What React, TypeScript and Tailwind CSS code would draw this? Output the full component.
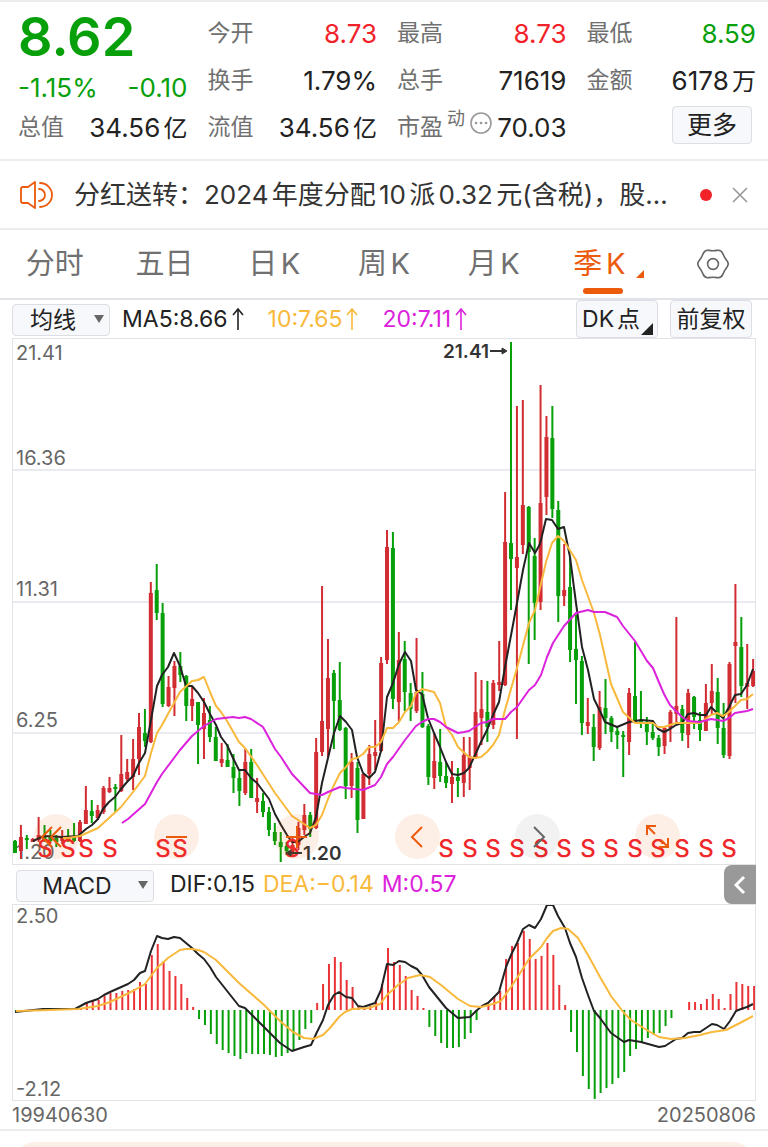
import React from 'react';

type Candle = [high: number, top: number, bottom: number, low: number, up: 0 | 1];

const START_X = 15;
const STEP = 5.905;

const RED = '#d22d32';
const GREEN = '#07a00a';

const candles: Candle[] = [
  [840, 841, 853, 853, 0], [825, 837, 851, 859, 1], [835, 838, 840, 849, 0], [838, 839, 842, 842, 1],
  [817, 835, 840, 842, 1], [825, 836, 840, 842, 0], [830, 837, 841, 843, 0], [835, 838, 842, 847, 0],
  [830, 837, 841, 844, 1], [829, 838, 841, 842, 0], [823, 836, 841, 842, 0], [820, 822, 841, 842, 1],
  [786, 810, 824, 824, 1], [800, 811, 816, 823, 0], [805, 810, 818, 820, 1], [786, 788, 812, 814, 1],
  [777, 788, 792, 793, 1], [784, 787, 789, 812, 0], [735, 774, 791, 792, 1], [759, 772, 779, 781, 1],
  [739, 759, 777, 790, 1], [713, 727, 759, 775, 1], [709, 733, 741, 747, 0], [582, 593, 742, 743, 1],
  [564, 590, 613, 620, 0], [603, 613, 704, 707, 0], [676, 687, 706, 707, 1], [661, 666, 688, 716, 1],
  [652, 666, 675, 682, 0], [675, 676, 706, 721, 0], [687, 699, 706, 721, 1], [702, 702, 725, 764, 0],
  [698, 713, 729, 759, 1], [706, 720, 737, 742, 0], [727, 737, 761, 761, 0], [743, 759, 763, 767, 1],
  [744, 760, 767, 767, 0], [754, 767, 778, 793, 0], [770, 778, 791, 806, 0], [749, 762, 793, 795, 1],
  [749, 762, 798, 798, 0], [778, 798, 802, 813, 1], [793, 801, 812, 817, 0], [807, 812, 830, 836, 0],
  [823, 832, 841, 845, 0], [832, 842, 847, 862, 0], [842, 846, 851, 855, 0], [838, 845, 853, 855, 1],
  [822, 828, 845, 850, 1], [804, 815, 830, 835, 1], [812, 815, 829, 837, 0], [738, 752, 828, 829, 1],
  [586, 721, 752, 756, 1], [639, 678, 729, 757, 1], [670, 673, 701, 749, 0], [662, 700, 730, 731, 0],
  [727, 728, 786, 799, 0], [753, 762, 786, 798, 1], [762, 768, 820, 833, 0], [774, 774, 819, 819, 1],
  [745, 754, 774, 785, 1], [720, 752, 756, 770, 1], [657, 663, 751, 752, 1], [530, 547, 660, 664, 1],
  [532, 548, 699, 709, 0], [632, 660, 702, 721, 1], [641, 659, 692, 711, 0], [683, 693, 709, 721, 0],
  [638, 692, 711, 713, 1], [672, 694, 727, 728, 0], [724, 726, 777, 785, 0], [733, 761, 778, 789, 1],
  [729, 762, 776, 782, 0], [763, 776, 783, 788, 0], [761, 777, 784, 803, 1], [768, 777, 781, 797, 0],
  [737, 755, 783, 797, 1], [737, 756, 768, 790, 1], [672, 712, 758, 759, 1], [680, 709, 718, 745, 1],
  [681, 712, 727, 742, 0], [680, 683, 725, 729, 1], [641, 682, 685, 691, 1], [492, 542, 685, 686, 1],
  [342, 543, 559, 610, 0], [406, 557, 568, 739, 1], [400, 505, 545, 554, 1], [506, 507, 552, 664, 0],
  [538, 556, 603, 640, 0], [385, 503, 602, 610, 1], [416, 437, 497, 515, 1], [406, 438, 509, 518, 0],
  [501, 510, 596, 622, 0], [544, 590, 596, 606, 1], [557, 587, 650, 662, 0], [615, 649, 660, 704, 0],
  [656, 661, 723, 735, 0], [698, 722, 726, 734, 1], [714, 727, 747, 761, 0], [691, 707, 748, 750, 1],
  [679, 708, 718, 734, 0], [716, 718, 732, 742, 0], [727, 731, 735, 749, 0], [731, 735, 737, 777, 0],
  [688, 693, 742, 755, 1], [642, 696, 722, 723, 0], [691, 720, 723, 728, 0], [717, 722, 732, 745, 0],
  [723, 732, 738, 740, 0], [735, 738, 747, 756, 0], [727, 728, 746, 754, 1], [710, 712, 728, 742, 1],
  [617, 706, 714, 723, 1], [705, 709, 733, 741, 0], [689, 693, 735, 748, 1], [696, 697, 717, 729, 0],
  [712, 720, 730, 741, 0], [684, 703, 731, 731, 1], [664, 691, 703, 715, 1], [678, 692, 728, 744, 0],
  [703, 728, 755, 758, 0], [662, 664, 756, 759, 1], [584, 642, 646, 703, 1], [617, 647, 686, 697, 0],
  [644, 683, 687, 709, 1], [659, 671, 686, 687, 1],
];

const ma5 =
  '33,841 44,836 62,837 78,836 86,829 92,825 98,819 103,809 109,802 115,797 121,789 127,782 133,776 139,763 145,753 151,720 157,686 162,675 168,667 174,653 180,666 186,686 192,686 198,693 204,702 210,714 216,725 221,737 227,745 233,758 239,770 245,770 251,778 257,783 269,799 275,814 281,825 287,835 292,842 298,842 304,837 310,833 316,817 322,783 328,758 334,733 340,716 346,722 352,730 357,757 363,773 369,778 375,772 381,751 387,697 393,683 399,664 405,652 411,661 416,690 422,694 428,718 434,733 440,747 446,762 452,774 458,775 464,773 469,768 475,755 481,742 487,730 493,715 499,702 505,667 512,630 517,603 523,570 529,543 535,553 540,544 546,519 552,520 558,529 564,527 570,557 576,603 582,647 588,670 594,699 600,711 605,722 617,727 629,722 641,720 653,721 658,729 664,732 670,729 676,725 682,723 688,714 694,713 700,715 706,715 711,707 717,713 723,718 729,707 735,695 741,694 747,685 753,669';
const ma10 =
  '63,838 68,838 80,836 98,828 109,818 121,807 133,792 145,776 151,753 157,733 162,725 174,703 180,692 192,681 198,680 204,677 210,692 216,706 221,712 227,721 239,742 245,748 257,765 275,793 292,816 304,824 310,828 316,825 322,815 328,799 334,785 340,773 346,767 352,759 357,758 363,754 369,747 375,747 381,742 387,728 393,728 399,722 405,712 411,706 416,693 422,689 434,692 440,703 446,727 452,735 458,747 469,757 475,758 481,757 487,752 493,745 499,735 505,710 517,668 529,623 535,610 540,588 546,562 552,543 558,536 564,541 576,560 582,580 594,613 600,635 611,684 623,712 635,723 653,723 658,727 664,727 676,723 700,723 711,715 717,713 723,716 729,712 741,700 747,699 753,694';
const ma20 =
  '122,823 128,819 145,804 157,782 162,774 180,750 192,736 204,726 216,719 233,717 239,718 245,717 251,719 263,727 275,749 281,757 292,774 310,793 322,795 328,792 340,787 346,788 363,790 375,785 381,777 387,764 393,757 405,740 416,726 422,722 428,719 434,719 440,722 446,727 458,733 464,732 469,731 475,727 481,723 487,722 493,719 505,719 511,712 517,707 529,690 535,685 541,675 547,657 553,643 564,626 576,613 588,610 594,612 605,612 617,617 623,626 635,641 647,661 653,668 658,680 664,694 670,705 676,711 682,717 688,721 700,722 711,719 723,721 729,718 735,713 741,712 747,711 753,709';

const histogram = [
  -2, 0, 0, 1, 1, 1, 1, 1, 1, 1, 1, 2, 7, 9, 10, 14, 17, 17, 19, 20, 21, 28, 26, 55, 66, 49, 39, 34, 26, 12, 3,
  -9, -15, -24, -34, -40, -43, -46, -49, -43, -44, -44, -44, -45, -47, -46, -43, -40, -30, -19, -13,
  7, 26, 46, 53, 48, 30, 23, 4, 2, 4, 8, 26, 62, 48, 45, 34, 20, 14, 2,
  -17, -26, -33, -38, -38, -37, -29, -23, -10, 0, 6, 14, 19, 51, 64, 67, 79, 71, 51, 54, 67, 55, 25, 5,
  -22, -42, -66, -79, -89, -83, -78, -74, -68, -62, -46, -39, -32, -28, -25, -23, -16, -8, 0, 0,
  8, 8, 6, 11, 16, 11, 2, 16, 28, 26, 24, 24,
];

const dif =
  '15,1012 43,1009 75,1009 86,1003 98,999 104,995 110,992 128,984 134,980 140,973 145,971 151,951 157,936 162,938 168,939 174,937 180,938 186,943 192,948 198,954 204,959 210,967 216,977 239,1006 245,1008 251,1014 263,1026 280,1043 292,1051 298,1049 304,1047 311,1045 317,1032 323,1020 328,1005 334,995 339,992 346,997 352,998 358,1006 363,1007 375,1003 381,990 387,964 393,965 399,961 405,962 411,966 417,969 422,975 429,987 446,1008 458,1018 470,1017 476,1011 482,1006 488,1003 494,997 499,992 506,967 511,955 517,943 523,929 529,925 535,928 541,919 547,905 553,905 558,916 565,928 570,943 576,957 582,978 588,995 594,1011 600,1018 611,1033 624,1042 629,1040 635,1041 641,1042 659,1047 665,1046 676,1039 682,1038 688,1033 694,1032 700,1032 706,1028 712,1024 717,1025 724,1029 730,1021 736,1011 741,1009 747,1007 753,1004';
const dea =
  '16,1011 50,1010 78,1009 98,1006 110,1002 133,991 145,984 157,968 168,958 180,950 186,949 192,949 198,950 204,952 216,960 227,971 239,983 263,1004 280,1021 293,1032 304,1038 313,1039 323,1035 330,1028 339,1017 345,1012 352,1009 369,1008 380,1004 387,995 398,985 408,978 420,975 430,977 441,985 458,999 470,1006 481,1007 493,1004 501,1001 511,987 517,978 529,959 541,947 547,938 553,931 561,928 568,929 578,938 588,955 600,977 611,996 624,1013 631,1020 645,1029 659,1037 671,1039 685,1038 700,1035 712,1032 726,1030 740,1023 753,1016';

const sellMarks = [45, 68, 86, 110, 163, 180, 292, 446, 470, 493, 517, 541, 564, 588, 611, 635, 658, 682, 706, 729];

const KLineChart = () => (
  <svg viewBox="12 338 744 527" className="block w-full" fontFamily="Inter, sans-serif">
    {[470, 602, 733].map((y) => (
      <line key={y} x1="12" x2="756" y1={y} y2={y} stroke="#e9ebf1" strokeWidth="2" />
    ))}
    <g fontSize="20" fill="#666">
      <text x="16" y="360">21.41</text>
      <text x="16" y="465">16.36</text>
      <text x="16" y="596">11.31</text>
      <text x="16" y="727">6.25</text>
      <text x="16" y="859">1.20</text>
    </g>
    {candles.map(([high, top, bottom, low, up], i) => {
      const x = START_X + i * STEP;
      const fill = up ? RED : GREEN;
      return (
        <g key={i} fill={fill}>
          <rect x={x - 1} y={high} width="2" height={low - high} />
          <rect x={x - 2} y={top} width="4" height={bottom - top} />
        </g>
      );
    })}
    <g fill="none" strokeWidth="2" strokeLinejoin="round">
      <polyline points={ma5} stroke="#222" />
      <polyline points={ma10} stroke="#f9b93c" />
      <polyline points={ma20} stroke="#dc22dc" />
    </g>
    <g fontSize="24" fontWeight="500" fill="#f0282c" textAnchor="middle">
      {sellMarks.map((x) => (
        <text key={x} x={x} y="857">S</text>
      ))}
    </g>
    <g fontSize="19" fontWeight="600" fill="#333">
      <text x="443" y="358">21.41</text>
      <text x="303" y="860">1.20</text>
    </g>
    <g stroke="#333" strokeWidth="2" fill="#333">
      <path d="M490 351H504" />
      <path d="M502 348L507 351L502 354Z" strokeWidth="1" />
      <path d="M288 853H302" />
      <path d="M291 850L286 853L291 856Z" strokeWidth="1" />
    </g>
  </svg>
);

const MacdChart = () => (
  <svg viewBox="12 904 744 197" className="block w-full" fontFamily="Inter, sans-serif">
    {histogram.map((v, i) => (
      <rect
        key={i}
        x={START_X + i * STEP}
        y={v > 0 ? 1010 - v : 1010}
        width="2"
        height={Math.abs(v)}
        fill={v > 0 ? '#ea3337' : GREEN}
      />
    ))}
    <g fill="none" strokeWidth="2" strokeLinejoin="round">
      <polyline points={dif} stroke="#222" />
      <polyline points={dea} stroke="#f9b93c" />
    </g>
    <g fontSize="20" fill="#666">
      <text x="16" y="923">2.50</text>
      <text x="16" y="1096">-2.12</text>
    </g>
  </svg>
);

interface StatProps {
  label: React.ReactNode;
  value: string;
  unit?: string;
  color?: string;
}

const Stat = ({ label, value, unit, color = 'text-[#222]' }: StatProps) => (
  <div className="flex h-[47px] items-center justify-between whitespace-nowrap">
    <span className="flex items-center text-[23px] text-[#707070]">{label}</span>
    <span className={`text-[26px] ${color}`}>
      {value}
      {unit && <span className="text-2xl">{unit}</span>}
    </span>
  </div>
);

const controls = [
  { name: '快退', d: 'M18 13L8 23L18 33M27 13L17 23L27 33' },
  { name: '缩小', d: 'M12 23H33' },
  { name: '放大', d: 'M12 23H33M23 12V34' },
  { name: '左移', d: 'M27 13L17 23L27 33' },
  { name: '右移', d: 'M19 13L29 23L19 33', gray: true },
  { name: '全屏', d: 'M12 21V12H21M12 12L20 20M33 24V33H24M33 33L26 26' },
];

const tabs = ['分时', '五日', '日K', '周K', '月K'];

const Picker = ({ label, value, className }: { label: string; value: string; className: string }) => (
  <div className={`relative h-8 ${className}`}>
    <select
      aria-label={label}
      className="h-full w-full appearance-none rounded-sm border border-[#dcdee4] bg-[#f7f8fb] pr-4 text-center text-[23px] leading-7 text-[#222]"
    >
      <option>{value}</option>
    </select>
    <svg viewBox="0 0 10 8" className="pointer-events-none absolute top-3 right-1.5 h-2 w-2.5">
      <path d="M0 0H10L5 8Z" fill="#666" />
    </svg>
  </div>
);

const Average = ({ text, color }: { text: string; color: string }) => (
  <span className={`flex items-center gap-1 ${color}`}>
    {text}
    <svg viewBox="0 0 12 22" className="h-[22px] w-3" fill="none" stroke="currentColor" strokeWidth="1.6">
      <path d="M6 22V1M1 7L6 1L11 7" />
    </svg>
  </span>
);

const App = () => {
  return (
    <div className="w-full overflow-hidden border-t-2 border-[#ececee] bg-white font-['Inter','Noto_Sans_CJK_SC',sans-serif] text-[#222] [text-autospace:normal]">
      <section className="grid h-[157px] grid-cols-4 gap-x-5 pt-2 pr-3 pl-[18px]">
        <div>
          <div className="flex h-[52px] items-center text-[54px] font-semibold text-[#07a00a]">8.62</div>
          <div className="flex h-[42px] items-center justify-between pt-2 text-[26px] text-[#07a00a]">
            <span>-1.15%</span>
            <span>-0.10</span>
          </div>
          <Stat label="总值" value="34.56" unit="亿" />
        </div>
        <div>
          <Stat label="今开" value="8.73" color="text-[#f22229]" />
          <Stat label="换手" value="1.79%" />
          <Stat label="流值" value="34.56" unit="亿" />
        </div>
        <div>
          <Stat label="最高" value="8.73" color="text-[#f22229]" />
          <Stat label="总手" value="71619" />
          <Stat
            label={
              <>
                市盈<sup className="ml-1 text-lg">动</sup>
                <svg viewBox="0 0 24 24" className="mb-2.5 ml-1 size-6" fill="none" stroke="#999" strokeWidth="1.6">
                  <circle cx="12" cy="12" r="10" />
                  <path d="M7 12h.1M12 12h.1M17 12h.1" strokeWidth="2.6" strokeLinecap="round" />
                </svg>
              </>
            }
            value="70.03"
          />
        </div>
        <div>
          <Stat label="最低" value="8.59" color="text-[#07a00a]" />
          <Stat label="金额" value="6178" unit="万" />
          <div className="flex justify-end pt-0.5 pr-1">
            <button className="h-[38px] w-20 rounded-sm border border-[#dcdee4] bg-[#f7f8fb] text-[25px] leading-9">更多</button>
          </div>
        </div>
      </section>

      <section className="flex h-[71px] items-center border-y-2 border-[#ececee] px-5">
        <svg viewBox="0 0 34 28" className="h-7 w-[34px] shrink-0" fill="none" stroke="#ec5a0c" strokeWidth="1.8" strokeLinejoin="round">
          <path d="M15 1V27L8 22H3Q1 22 1 20V8Q1 6 3 6H8Z" />
          <path d="M19 8A6 6 0 0 1 19 20M20 2A12 12 0 0 1 20 26" strokeLinecap="round" />
        </svg>
        <p className="ml-5 min-w-0 flex-1 text-[26px] whitespace-nowrap text-[#333]">
          分红送转：2024年度分配10派0.32元(含税)，股…
        </p>
        <span className="size-3 rounded-full bg-[#f22229]" />
        <button aria-label="关闭" className="ml-5">
          <svg viewBox="0 0 16 16" className="size-4" stroke="#999" strokeWidth="1.6">
            <path d="M1 1L15 15M15 1L1 15" />
          </svg>
        </button>
      </section>

      <nav className="grid h-[70px] grid-cols-7 items-center border-b-2 border-[#e2e3e9] text-[29px] text-[#707070]">
        {tabs.map((tab) => (
          <button key={tab}>{tab}</button>
        ))}
        <button className="relative h-full pr-2 text-[#ec5a0c]">
          季K
          <svg viewBox="0 0 8 8" className="absolute right-3.5 bottom-5 size-2">
            <path d="M8 0V8H0Z" fill="#ec5a0c" />
          </svg>
          <span className="absolute inset-x-0 bottom-1 mx-auto h-1.5 w-10 rounded-full bg-[#ec5a0c]" />
        </button>
        <button aria-label="设置" className="flex justify-center">
          <svg viewBox="0 0 32 32" className="size-8" fill="none" stroke="#666" strokeWidth="1.6">
            <circle cx="16" cy="16" r="5.4" />
            <path d="M29.9 19.2Q27.3 22.5 25.8 26.4Q24.3 30.3 20.1 29.6Q16 29 11.9 29.6Q7.7 30.3 6.2 26.4Q4.7 22.5 2.1 19.2Q-.5 16 2.1 12.8Q4.7 9.5 6.2 5.6Q7.7 1.7 11.9 2.4Q16 3 20.1 2.4Q24.3 1.7 25.8 5.6Q27.3 9.5 29.9 12.8Q32.5 16 29.9 19.2Z" />
          </svg>
        </button>
      </nav>

      <section className="px-3">
        <div className="flex h-[38px] items-center text-[23px] whitespace-nowrap">
          <Picker label="指标" value="均线" className="w-[98px]" />
          <div className="ml-3 flex gap-6">
            <Average text="MA5:8.66" color="text-[#222]" />
            <Average text="10:7.65" color="text-[#f9b93c]" />
            <Average text="20:7.11" color="text-[#dc22dc]" />
          </div>
          <button className="relative ml-auto h-full w-[82px] rounded-sm border border-[#dcdee4] bg-[#f7f8fb] pr-3">
            DK点
            <svg viewBox="0 0 12 12" className="absolute right-1 bottom-0.5 size-3">
              <path d="M12 0V12H0Z" fill="#222" />
            </svg>
          </button>
          <button className="mr-1 ml-3 h-full w-[82px] rounded-sm border border-[#dcdee4] bg-[#f7f8fb]">前复权</button>
        </div>

        <div className="relative outline outline-1 -outline-offset-1 outline-[#e2e3e9]">
          <KLineChart />
          <div className="absolute bottom-1.5 left-[22px] flex w-[646px] max-w-full justify-between">
            {controls.map(({ name, d, gray }) => (
              <button
                key={name}
                aria-label={name}
                className={`size-[45px] rounded-full ${gray ? 'bg-black/5' : 'bg-[#ec5a0c]/10'}`}
              >
                <svg viewBox="0 0 45 45" fill="none" stroke={gray ? '#666' : '#ec5a0c'} strokeWidth="2">
                  <path d={d} />
                </svg>
              </button>
            ))}
          </div>
        </div>

        <div className="flex h-[39px] items-center text-[23px] whitespace-nowrap">
          <Picker label="副图指标" value="MACD" className="ml-1 w-[138px]" />
          <span className="ml-4">DIF:0.15</span>
          <span className="ml-2 text-[#f9b93c]">DEA:−0.14</span>
          <span className="ml-2 text-[#dc22dc]">M:0.57</span>
          <button aria-label="展开" className="ml-auto flex h-full w-8 items-center justify-center rounded-l-lg bg-[#999]">
            <svg viewBox="0 0 12 20" className="h-5 w-3" fill="none" stroke="#fff" strokeWidth="3">
              <path d="M10 2L2 10L10 18" />
            </svg>
          </button>
        </div>

        <div className="outline outline-1 -outline-offset-1 outline-[#e2e3e9]">
          <MacdChart />
        </div>

        <div className="flex h-7 items-center justify-between text-[20px] text-[#666]">
          <span>19940630</span>
          <span>20250806</span>
        </div>
      </section>

      <div className="border-t-2 border-[#ececee] px-3 pt-[11px]">
        <div className="h-[5px] overflow-hidden">
          <div className="h-12 rounded-t-3xl bg-[#fdeee6]" />
        </div>
      </div>
    </div>
  );
};

export default App;
